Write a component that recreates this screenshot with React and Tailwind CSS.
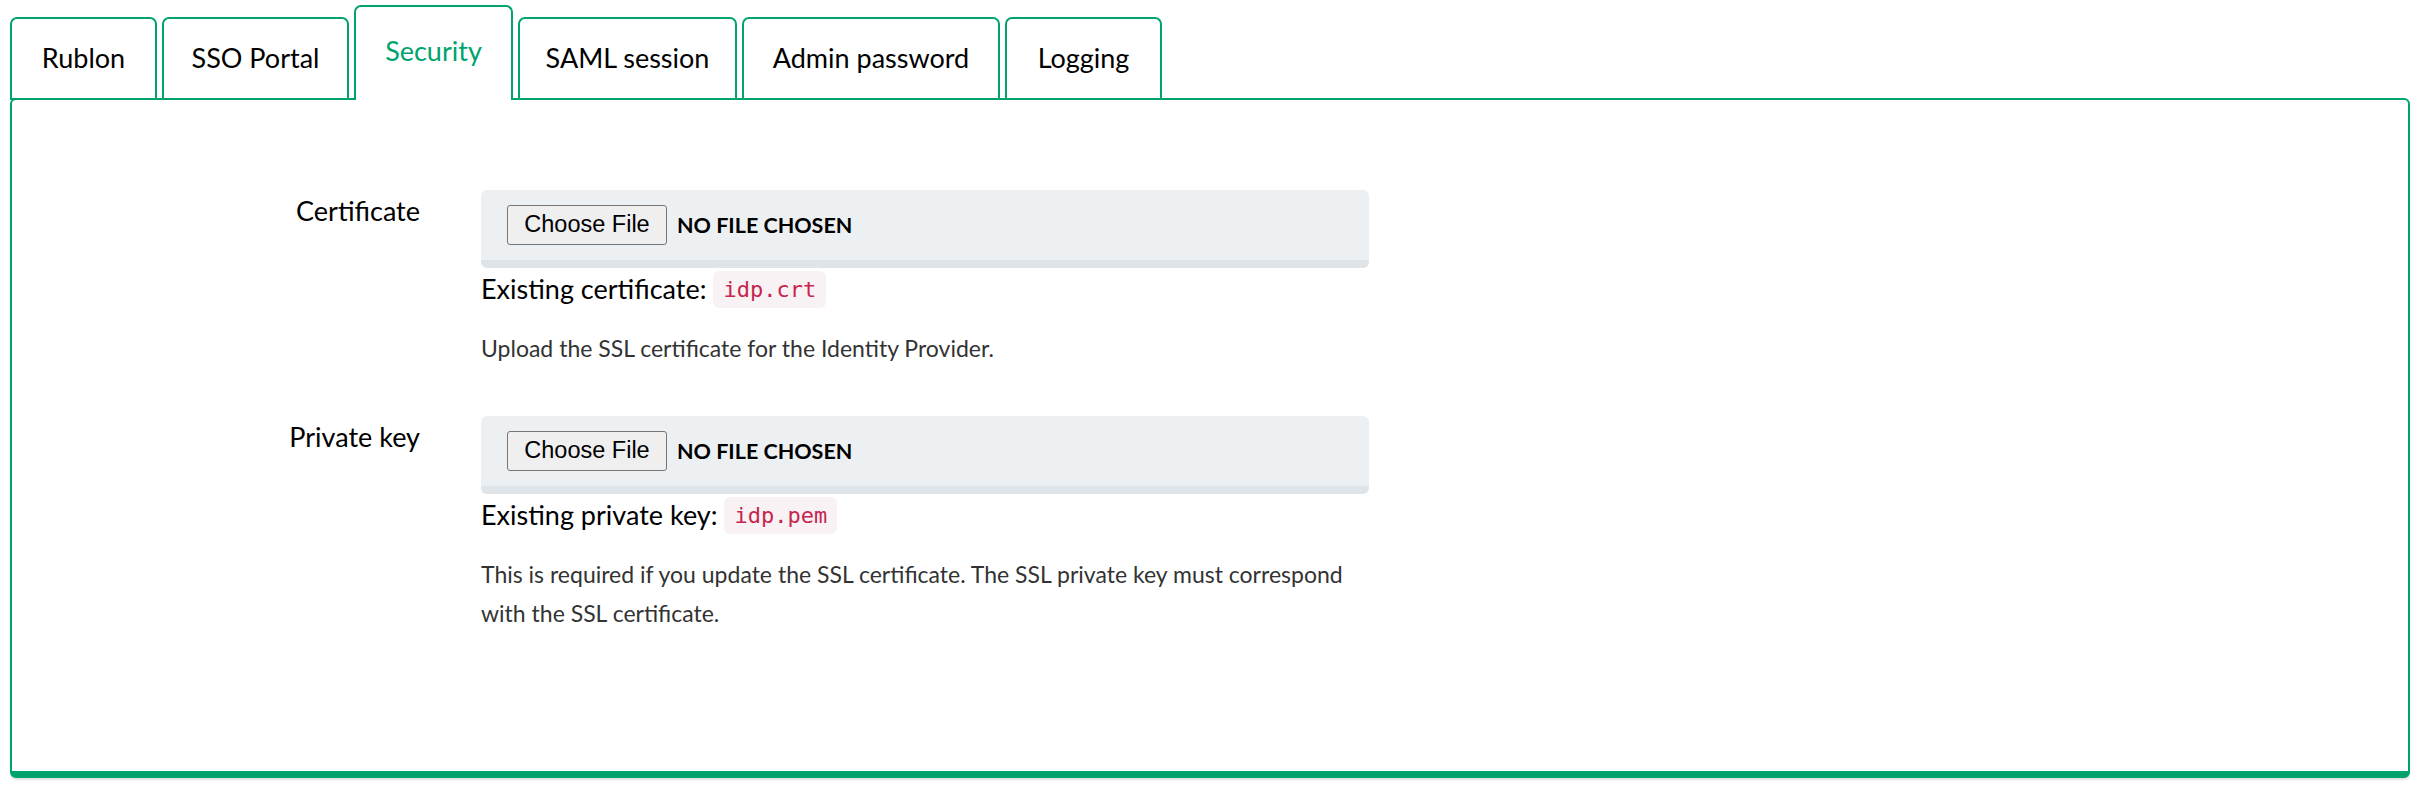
const tabs = [
  { name: "Rublon", width: "w-[147px]" },
  { name: "SSO Portal", width: "w-[187px]" },
  { name: "Security", width: "w-[159px]", active: true },
  { name: "SAML session", width: "w-[219px]" },
  { name: "Admin password", width: "w-[258px]" },
  { name: "Logging", width: "w-[157px]" },
];

function Tabs() {
  return (
    <div className="flex items-end gap-[5px] h-[95px] -mb-[2px] relative z-10">
      {tabs.map((tab) =>
        tab.active ? (
          <div
            key={tab.name}
            className={`${tab.width} h-[95px] pb-[4px] flex items-center justify-center border-2 border-b-0 border-[#00a36e] rounded-t-[7px] bg-white text-[27px] text-[#00a36e]`}
          >
            {tab.name}
          </div>
        ) : (
          <div
            key={tab.name}
            className={`${tab.width} h-[83px] flex items-center justify-center border-2 border-[#00a36e] rounded-t-[7px] bg-white text-[27px] text-black`}
          >
            {tab.name}
          </div>
        )
      )}
    </div>
  );
}

function FileField({ label, existing, file, children }) {
  return (
    <div className="flex">
      <label className="w-[408px] shrink-0 text-right text-[27px] leading-[38px] pt-[2px] text-black">
        {label}
      </label>
      <div className="ml-[61px] w-[888px]">
        <div className="h-[78px] flex items-center px-[26px] bg-[#edf0f3] border-b-[8px] border-[#dfe4e9] rounded-[6px]">
          <button className="w-[160px] h-[40px] shrink-0 bg-[#efefef] border border-[#767676] rounded-[3px] text-[23.5px] text-black [font-family:'Liberation_Sans',Arial,sans-serif]">
            Choose File
          </button>
          <span className="ml-[10px] text-[21.5px] font-bold uppercase text-black">
            No file chosen
          </span>
        </div>
        <div className="h-[42px] flex items-center text-[27px] text-black">
          <span>{existing}</span>
          <code className="ml-[7px] px-[10px] h-[37px] leading-[37px] rounded-[6px] bg-[#f9f2f4] text-[#c7254e] text-[22px] [font-family:'DejaVu_Sans_Mono',monospace]">
            {file}
          </code>
        </div>
        <p className="mt-[19px] text-[23px] leading-[39px] text-[#333]">
          {children}
        </p>
      </div>
    </div>
  );
}

export default function App() {
  return (
    <div className="min-h-screen bg-white pt-[5px] pl-[10px] pr-[13px] [font-family:Lato,sans-serif]">
      <Tabs />
      <div className="border-2 border-b-[7px] border-[#00a36e] rounded-[6px] bg-white shadow-[0_2px_2px_rgba(0,0,0,0.12)] pt-[90px] pb-[138px]">
        <FileField label="Certificate" existing="Existing certificate:" file="idp.crt">
          Upload the SSL certificate for the Identity Provider.
        </FileField>
        <div className="mt-[48px]">
          <FileField label="Private key" existing="Existing private key:" file="idp.pem">
            This is required if you update the SSL certificate. The SSL private key must correspond{" "}
            <br />
            with the SSL certificate.
          </FileField>
        </div>
      </div>
    </div>
  );
}
